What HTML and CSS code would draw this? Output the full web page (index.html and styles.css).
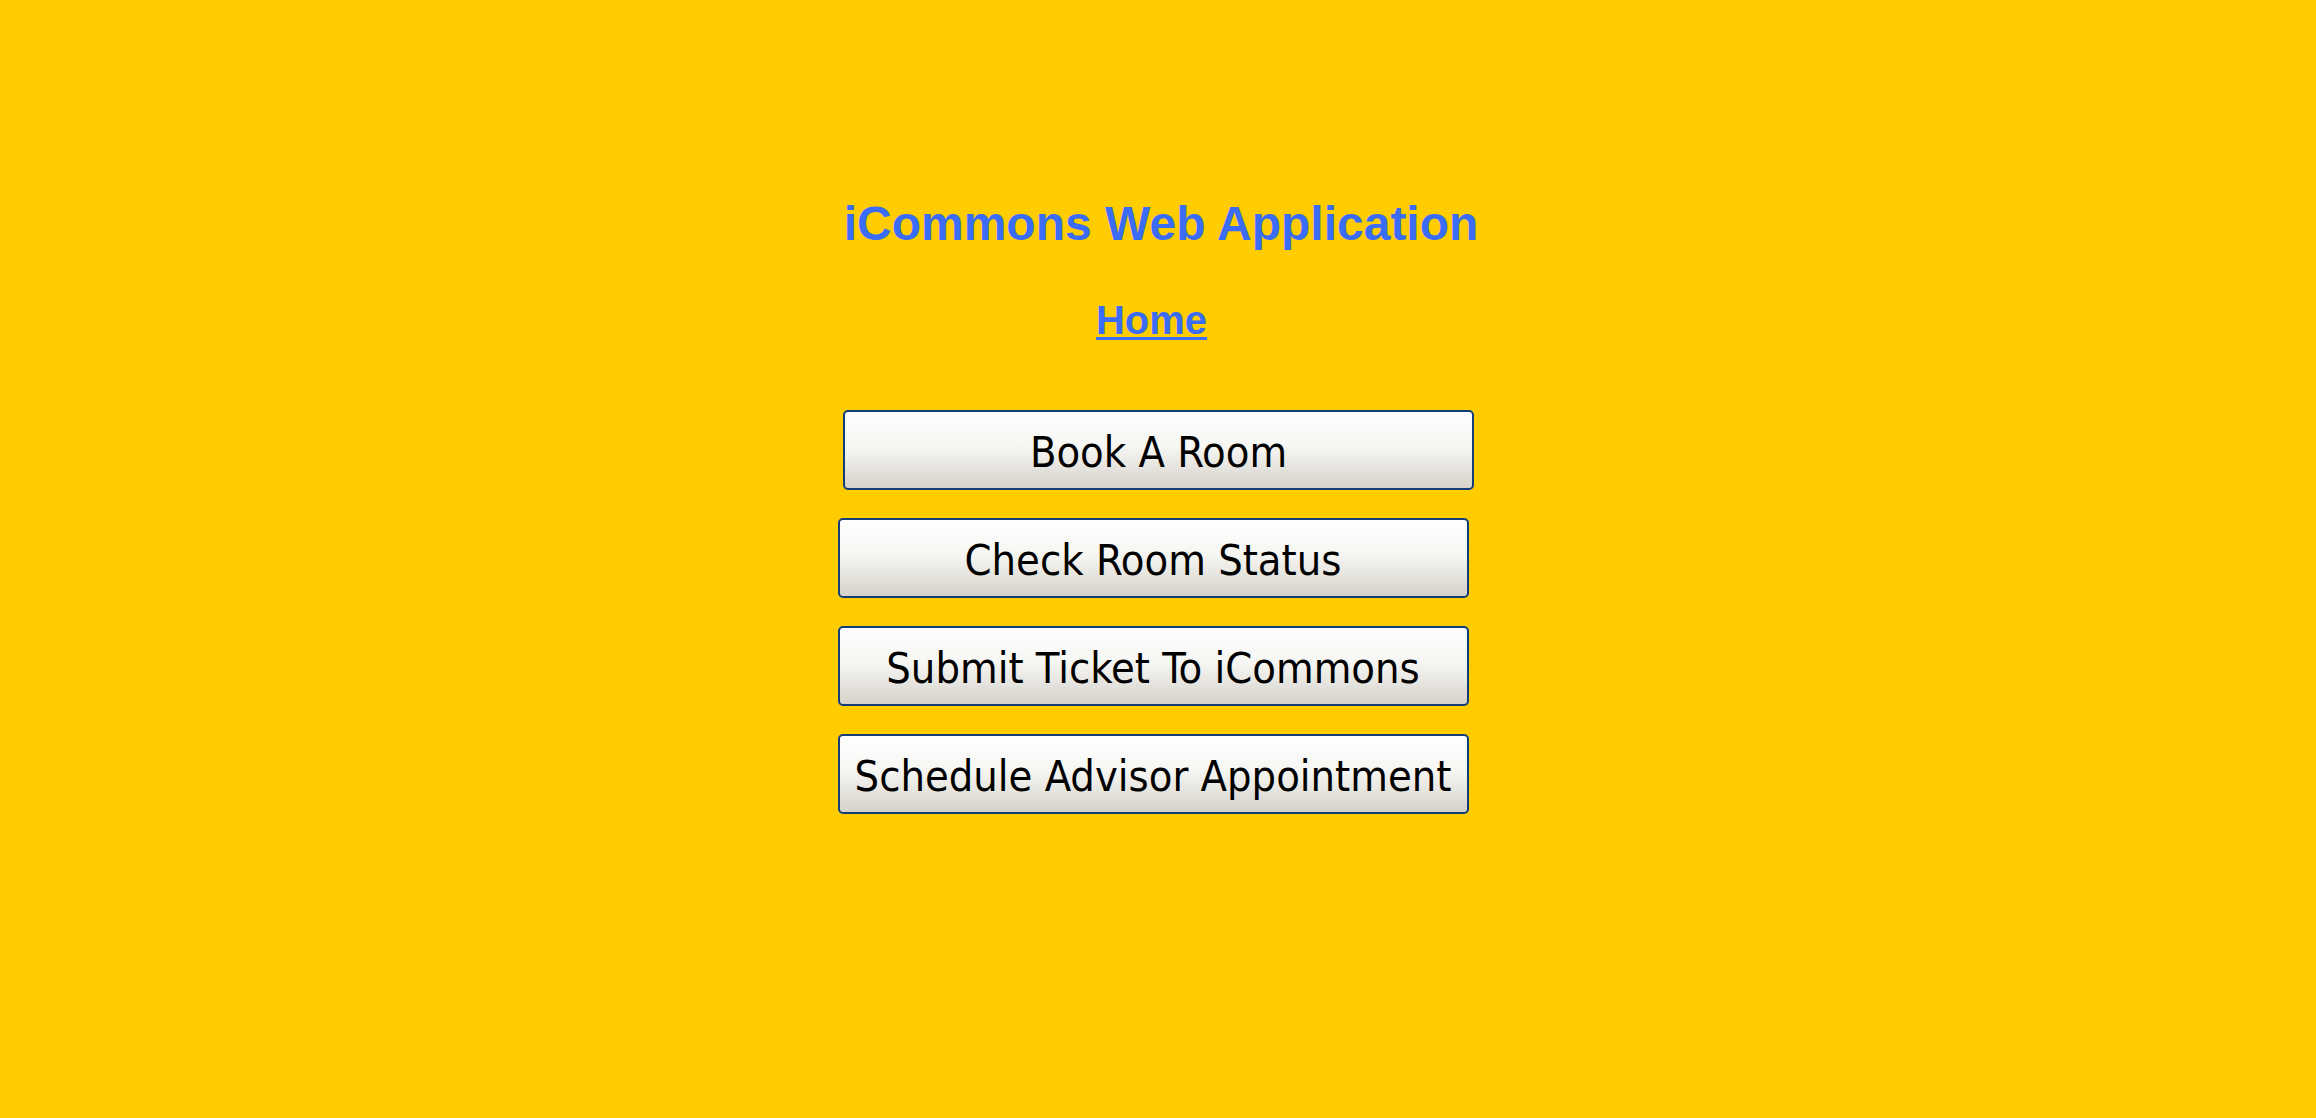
FILE: index.html
```html
<!DOCTYPE html>
<html lang="en">
<head>
    <meta charset="UTF-8">
    <meta name="viewport" content="width=device-width, initial-scale=1.0">
    <title>iCommons Web Application</title>
    <link rel="stylesheet" href="styles.css">
</head>
<body>

<div class="page">
    <h1 class="title">iCommons Web Application</h1>

    <a class="home" href="#">Home</a>

    <!-- Main menu -->
    <div class="menu">
        <button class="menu-btn first">Book A Room</button>
        <button class="menu-btn">Check Room Status</button>
        <button class="menu-btn">Submit Ticket To iCommons</button>
        <button class="menu-btn">Schedule Advisor Appointment</button>
    </div>
</div>

</body>
</html>
```

FILE: styles.css
```css
html, body {
    margin: 0;
    padding: 0;
    background-color: #ffcc00;
}
body {
    font-family: "Liberation Sans", Arial, sans-serif;
}
.page {
    display: flex;
    flex-direction: column;
    align-items: center;
    padding-top: 196px;
}
.title {
    margin: 0 0 0 6px;
    font-size: 48px;
    line-height: 55px;
    font-weight: bold;
    color: #3b6cf5;
}
.home {
    margin: 46px 13px 0 0;
    font-size: 40px;
    line-height: 46px;
    font-weight: bold;
    color: #3b6cf5;
    text-decoration: underline;
    text-decoration-thickness: 3px;
    text-underline-offset: 3px;
}
.menu {
    display: flex;
    flex-direction: column;
    align-items: center;
    gap: 28px;
    margin-top: 67px;
}
.menu-btn {
    width: 631px;
    height: 80px;
    padding: 3px 0 0;
    margin-right: 10px;
    font-family: "DejaVu Sans Condensed", "DejaVu Sans", Verdana, sans-serif;
    font-size: 43px;
    color: #000;
    background: linear-gradient(to bottom, #fefefe 0%, #f6f6f3 45%, #d6d2ca 100%);
    border: 2px solid #123f7c;
    border-radius: 5px;
    cursor: pointer;
}
.menu-btn.first {
    margin: 0 0 0 1px;
}
```
